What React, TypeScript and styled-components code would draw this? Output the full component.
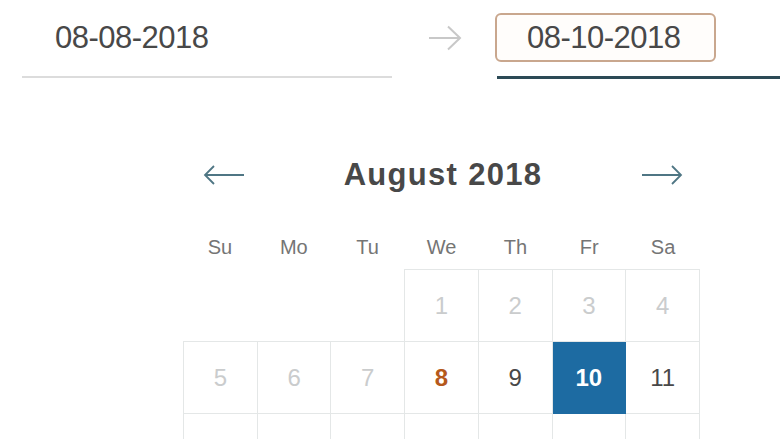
import React from "react";
import styled, { createGlobalStyle } from "styled-components";

const GlobalStyle = createGlobalStyle`
  html, body {
    margin: 0;
    padding: 0;
    background: #fff;
    overflow: hidden;
  }
  body {
    font-family: "Liberation Sans", Arial, sans-serif;
    color: #484848;
  }
`;

type DayState = "disabled" | "normal" | "start" | "selected";

const Page = styled.div`
  width: 780px;
  height: 439px;
  overflow: hidden;
`;

const InputsRow = styled.div`
  display: flex;
  align-items: flex-start;
  padding-left: 22px;
  height: 80px;
`;

const DateField = styled.div<{ $active?: boolean }>`
  box-sizing: content-box;
  height: 76px;
  display: flex;
  align-items: ${(p) => (p.$active ? "flex-start" : "center")};
  width: ${(p) => (p.$active ? "auto" : "337px")};
  flex: ${(p) => (p.$active ? "1" : "0 0 auto")};
  padding-left: ${(p) => (p.$active ? "0" : "33px")};
  border-bottom: ${(p) => (p.$active ? "3px solid #2c4a56" : "2px solid #dcdcdc")};
  font-size: 31px;
  letter-spacing: -0.5px;
  color: #484848;
`;

const FocusBox = styled.div`
  margin: 13px 0 0 -2px;
  width: 187px;
  height: 45px;
  padding-left: 30px;
  border: 2px solid #c9a78e;
  border-radius: 6px;
  display: flex;
  align-items: center;
  background: #fffdfb;
`;

const ArrowSlot = styled.div`
  width: 105px;
  height: 76px;
  display: flex;
  align-items: center;
  justify-content: center;
`;

const Calendar = styled.div`
  margin: 70px 0 0 183px;
  width: 517px;
`;

const Caption = styled.div`
  height: 50px;
  display: flex;
  align-items: center;
  justify-content: space-between;
  padding: 0 17px 0 20px;
`;

const NavButton = styled.button`
  border: none;
  background: none;
  padding: 0;
  width: 42px;
  height: 22px;
  display: flex;
  align-items: center;
  justify-content: center;
  cursor: pointer;
`;

const Title = styled.div`
  font-size: 31px;
  font-weight: bold;
  letter-spacing: 1.3px;
  color: #484848;
`;

const WeekHeader = styled.div`
  margin-top: 32px;
  height: 30px;
  display: grid;
  grid-template-columns: repeat(7, 1fr);
  align-items: center;
`;

const WeekDay = styled.div`
  text-align: center;
  font-size: 20px;
  color: #757575;
`;

const DayTable = styled.table`
  margin-top: 7px;
  width: 517px;
  border-collapse: collapse;
  table-layout: fixed;
`;

const DayCell = styled.td<{ $state?: DayState; $empty?: boolean }>`
  height: 71px;
  padding: 0;
  text-align: center;
  font-size: 24px;
  border: ${(p) => (p.$empty ? "none" : "1px solid #e4e7e7")};
  color: ${(p) =>
    p.$state === "disabled"
      ? "#cacccd"
      : p.$state === "start"
      ? "#b5591c"
      : p.$state === "selected"
      ? "#fff"
      : "#484848"};
  font-weight: ${(p) => (p.$state === "start" || p.$state === "selected" ? "bold" : "normal")};
  background: ${(p) => (p.$state === "selected" ? "#1d6ba2" : "#fff")};
  ${(p) => (p.$state === "selected" ? "border-color: #1d6ba2;" : "")}
`;

const InputArrow = () => (
  <svg width="34" height="26" viewBox="0 0 34 26" fill="none">
    <path d="M1 13H32M20 1.5L32 13L20 24.5" stroke="#c8c8c8" strokeWidth="2" />
  </svg>
);

const NavArrow = ({ dir }: { dir: "left" | "right" }) => (
  <svg width="42" height="22" viewBox="0 0 42 22" fill="none">
    {dir === "left" ? (
      <path d="M2 11H41M11 2L2 11L11 20" stroke="#4f7684" strokeWidth="1.8" />
    ) : (
      <path d="M1 11H40M31 2L40 11L31 20" stroke="#4f7684" strokeWidth="1.8" />
    )}
  </svg>
);

const weekDays = ["Su", "Mo", "Tu", "We", "Th", "Fr", "Sa"];

function buildWeeks(): (number | null)[][] {
  const cells: (number | null)[] = [null, null, null];
  for (let d = 1; d <= 31; d++) cells.push(d);
  while (cells.length % 7 !== 0) cells.push(null);
  const weeks: (number | null)[][] = [];
  for (let i = 0; i < cells.length; i += 7) weeks.push(cells.slice(i, i + 7));
  return weeks;
}

const dayState = (d: number): DayState => {
  if (d < 8) return "disabled";
  if (d === 8) return "start";
  if (d === 10) return "selected";
  return "normal";
};

export default function App() {
  const weeks = buildWeeks();
  return (
    <Page>
      <GlobalStyle />
      <InputsRow>
        <DateField>08-08-2018</DateField>
        <ArrowSlot>
          <InputArrow />
        </ArrowSlot>
        <DateField $active>
          <FocusBox>08-10-2018</FocusBox>
        </DateField>
      </InputsRow>
      <Calendar>
        <Caption>
          <NavButton aria-label="Previous month">
            <NavArrow dir="left" />
          </NavButton>
          <Title>August 2018</Title>
          <NavButton aria-label="Next month">
            <NavArrow dir="right" />
          </NavButton>
        </Caption>
        <WeekHeader>
          {weekDays.map((w) => (
            <WeekDay key={w}>{w}</WeekDay>
          ))}
        </WeekHeader>
        <DayTable>
          <tbody>
            {weeks.map((week, i) => (
              <tr key={i}>
                {week.map((d, j) =>
                  d === null ? (
                    <DayCell key={j} $empty />
                  ) : (
                    <DayCell key={j} $state={dayState(d)}>
                      {d}
                    </DayCell>
                  )
                )}
              </tr>
            ))}
          </tbody>
        </DayTable>
      </Calendar>
    </Page>
  );
}
